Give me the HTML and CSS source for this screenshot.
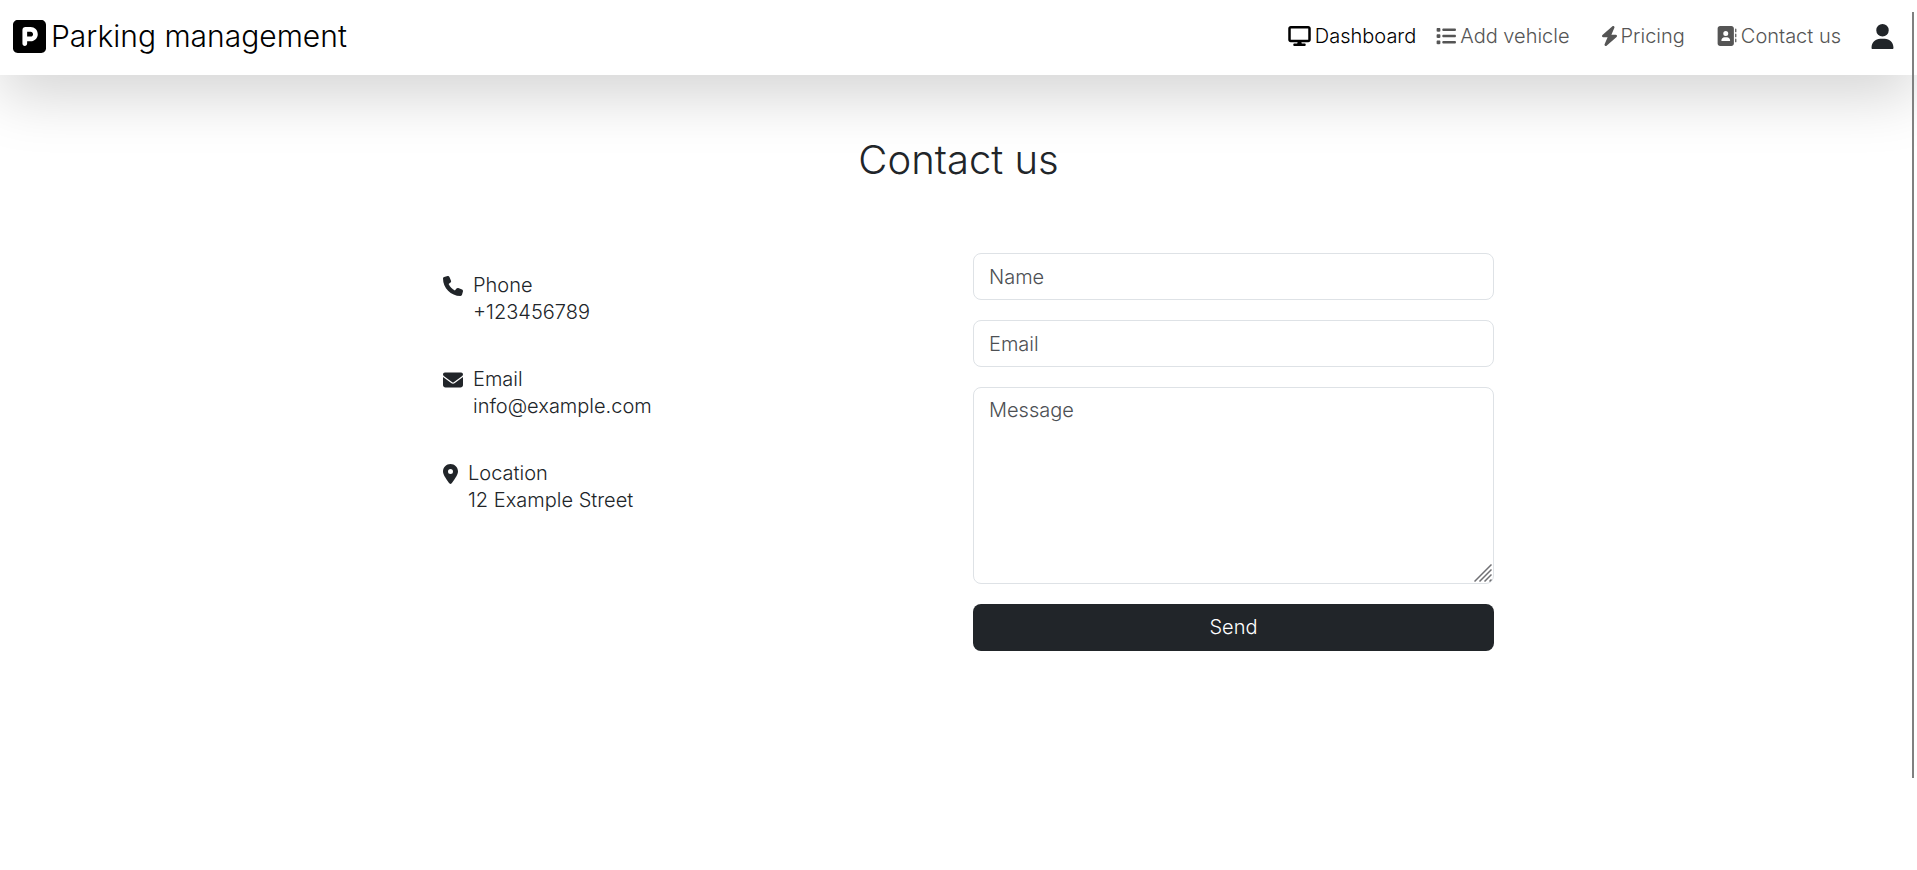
FILE: index.html
```html
<!DOCTYPE html>
<html lang="en">
<head>
<meta charset="utf-8">
<meta name="viewport" content="width=device-width, initial-scale=1">
<title>Parking management</title>
<link rel="stylesheet" href="styles.css">
</head>
<body>
<header class="navbar">
  <a class="brand" href="#">
    <svg class="brand-icon" viewBox="0 32 448 448" aria-hidden="true"><path d="M64 32C28.700 32 0 60.700 0 96V416c0 35.300 28.700 64 64 64H384c35.300 0 64-28.700 64-64V96c0-35.300-28.700-64-64-64H64zM192 256h48c17.700 0 32-14.300 32-32s-14.300-32-32-32H192v64zm48 64H192v32c0 17.700-14.300 32-32 32s-32-14.300-32-32V168c0-22.100 17.900-40 40-40h72c53 0 96 43 96 96s-43 96-96 96z"/></svg>
    <span>Parking management</span>
  </a>
  <nav class="menu">
    <a class="menu-link menu-link-active" href="#">
      <svg class="icon icon-wide" viewBox="0 0 576 512" aria-hidden="true"><path d="M64 0C28.700 0 0 28.700 0 64V352c0 35.300 28.700 64 64 64H240l-10.700 32H160c-17.700 0-32 14.300-32 32s14.300 32 32 32H416c17.700 0 32-14.300 32-32s-14.300-32-32-32H346.700L336 416H512c35.300 0 64-28.700 64-64V64c0-35.300-28.700-64-64-64H64zM512 64V352H64V64H512z"/></svg>
      <span>Dashboard</span>
    </a>
    <a class="menu-link" href="#">
      <svg class="icon" viewBox="0 0 512 512" aria-hidden="true"><path d="M40 48C26.700 48 16 58.700 16 72v48c0 13.300 10.700 24 24 24H88c13.300 0 24-10.700 24-24V72c0-13.300-10.700-24-24-24H40zM192 64c-17.700 0-32 14.300-32 32s14.300 32 32 32H480c17.700 0 32-14.300 32-32s-14.300-32-32-32H192zm0 160c-17.700 0-32 14.300-32 32s14.300 32 32 32H480c17.700 0 32-14.300 32-32s-14.300-32-32-32H192zm0 160c-17.700 0-32 14.300-32 32s14.300 32 32 32H480c17.700 0 32-14.300 32-32s-14.300-32-32-32H192zM16 232v48c0 13.300 10.700 24 24 24H88c13.300 0 24-10.700 24-24V232c0-13.300-10.700-24-24-24H40c-13.300 0-24 10.700-24 24zM40 368c-13.300 0-24 10.700-24 24v48c0 13.300 10.700 24 24 24H88c13.300 0 24-10.700 24-24V392c0-13.300-10.700-24-24-24H40z"/></svg>
      <span>Add vehicle</span>
    </a>
    <a class="menu-link menu-link-spaced" href="#">
      <svg class="icon icon-narrow" viewBox="32 0 384 512" aria-hidden="true"><path d="M349.400 44.600c5.900-13.700 1.500-29.700-10.600-38.500s-28.600-8-39.900 1.800l-256 224c-10 8.800-13.600 22.900-8.900 35.300S50.700 288 64 288H175.500L98.600 467.400c-5.900 13.700-1.500 29.700 10.600 38.500s28.600 8 39.900-1.800l256-224c10-8.800 13.600-22.900 8.900-35.300s-16.600-20.700-30-20.700H272.500L349.400 44.600z"/></svg>
      <span>Pricing</span>
    </a>
    <a class="menu-link menu-link-spaced" href="#">
      <svg class="icon" viewBox="16 0 512 512" aria-hidden="true"><path d="M96 0C60.700 0 32 28.700 32 64V448c0 35.300 28.700 64 64 64H384c35.300 0 64-28.700 64-64V64c0-35.300-28.700-64-64-64H96zM208 288h64c44.200 0 80 35.800 80 80c0 8.800-7.200 16-16 16H144c-8.800 0-16-7.200-16-16c0-44.200 35.800-80 80-80zm-32-96a64 64 0 1 1 128 0 64 64 0 1 1 -128 0zM512 80c0-8.800-7.200-16-16-16s-16 7.200-16 16v64c0 8.800 7.200 16 16 16s16-7.200 16-16V80zM496 192c-8.800 0-16 7.200-16 16v64c0 8.800 7.200 16 16 16s16-7.200 16-16V208c0-8.800-7.200-16-16-16zm16 144c0-8.800-7.200-16-16-16s-16 7.200-16 16v64c0 8.800 7.200 16 16 16s16-7.200 16-16V336z"/></svg>
      <span>Contact us</span>
    </a>
    <button class="account" type="button" aria-label="Account">
      <svg class="account-icon" viewBox="0 0 448 512" aria-hidden="true"><path d="M224 256A128 128 0 1 0 224 0a128 128 0 1 0 0 256zm-45.700 48C79.800 304 0 383.800 0 482.300C0 498.700 0 512 12 512H436c12 0 12-13.300 12-29.700C448 383.800 368.200 304 269.700 304H178.300z"/></svg>
    </button>
  </nav>
</header>
<main class="page">
  <h1 class="title">Contact us</h1>
  <div class="columns">
    <address class="details">
      <div class="detail">
        <svg class="icon" viewBox="0 0 512 512" aria-hidden="true"><path d="M164.900 24.600c-7.700-18.600-28-28.500-47.400-23.200l-88 24C12.100 30.200 0 46 0 64C0 311.400 200.600 512 448 512c18 0 33.800-12.100 38.600-29.500l24-88c5.300-19.400-4.600-39.700-23.200-47.400l-96-40c-16.300-6.800-35.200-2.100-46.300 11.600L304.700 368C234.300 334.700 177.300 277.700 144 207.300L193.300 167c13.700-11.200 18.400-30 11.600-46.300l-40-96z"/></svg>
        <div>Phone<br>+123456789</div>
      </div>
      <div class="detail">
        <svg class="icon" viewBox="0 0 512 512" aria-hidden="true"><path d="M48 64C21.500 64 0 85.500 0 112c0 15.100 7.100 29.300 19.200 38.400L236.800 313.600c11.400 8.500 27 8.500 38.400 0L492.800 150.400c12.100-9.100 19.200-23.300 19.200-38.400c0-26.500-21.500-48-48-48H48zM0 176V384c0 35.300 28.700 64 64 64H448c35.300 0 64-28.700 64-64V176L294.400 339.200c-22.800 17.100-54 17.100-76.800 0L0 176z"/></svg>
        <div>Email<br>info@example.com</div>
      </div>
      <div class="detail">
        <svg class="icon icon-narrow" viewBox="0 0 384 512" aria-hidden="true"><path d="M215.700 499.200C267 435 384 279.400 384 192C384 86 298 0 192 0S0 86 0 192c0 87.400 117 243 168.300 307.200c12.300 15.300 35.100 15.300 47.400 0zM192 128a64 64 0 1 1 0 128 64 64 0 1 1 0-128z"/></svg>
        <div>Location<br>12 Example Street</div>
      </div>
    </address>
    <form class="form">
      <input class="field" type="text" placeholder="Name" aria-label="Name">
      <input class="field" type="email" placeholder="Email" aria-label="Email">
      <div class="message">
        <textarea class="field field-message" placeholder="Message" aria-label="Message"></textarea>
        <svg class="grip" viewBox="0 0 18 18" aria-hidden="true"><path d="M0.500 17.500L17.500 0.500M5.500 17.500L17.500 5.500M10.500 17.500L17.500 10.500M15.500 17.500L17.500 15.500"/></svg>
      </div>
      <button class="send" type="submit">Send</button>
    </form>
  </div>
</main>
<div class="scroll-line"></div>
</body>
</html>
```
FILE: styles.css
```css
* {
  box-sizing: border-box;
}

body {
  margin: 0;
  background: #fff;
  color: #212529;
  font-family: Inter, "Liberation Sans", sans-serif;
  font-size: 20px;
  font-weight: 300;
  line-height: 27px;
}

.navbar {
  display: flex;
  align-items: center;
  justify-content: space-between;
  height: 75px;
  padding: 0 23px 3px 13px;
  background: #fff;
  box-shadow: 0 20px 60px rgba(0, 0, 0, 0.175);
}

.brand,
.menu,
.menu-link {
  display: flex;
  align-items: center;
}

.brand {
  gap: 5px;
  color: #000;
  font-size: 30px;
  text-decoration: none;
}

.brand-icon {
  width: 33px;
  height: 33px;
}

.menu {
  gap: 20px;
}

.menu-link {
  gap: 4px;
  color: #555;
  text-decoration: none;
}

.menu-link-active {
  color: #000;
}

.menu-link-spaced {
  margin-left: 12px;
}

.icon {
  flex: none;
  width: 20px;
  height: 20px;
}

.icon-wide {
  width: 23px;
}

.icon-narrow {
  width: 15px;
}

svg {
  display: block;
  fill: currentColor;
}

.account {
  margin-left: 10px;
  padding: 0;
  border: 0;
  background: none;
  color: #212529;
}

.account-icon {
  width: 23px;
  height: 25px;
}

.page {
  width: 100%;
  max-width: 1071px;
  margin: 0 auto;
  padding-top: 61px;
}

.title {
  margin: 0 0 69px;
  font-size: 40px;
  font-weight: 300;
  line-height: 48px;
  text-align: center;
}

.columns {
  display: grid;
  grid-template-columns: 1fr 1fr;
  gap: 29px;
}

.details {
  display: flex;
  flex-direction: column;
  gap: 40px;
  padding: 19px 20px;
  font-style: normal;
}

.detail {
  display: flex;
  gap: 10px;
}

.detail .icon {
  margin-top: 4px;
}

.form {
  display: flex;
  flex-direction: column;
  gap: 20px;
}

.field {
  display: block;
  width: 100%;
  height: 47px;
  padding: 9px 15px;
  border: 1px solid #dee2e6;
  border-radius: 8px;
  background: #fff;
  color: #212529;
  font: inherit;
}

.field::placeholder {
  color: #4d5054;
  opacity: 1;
}

.message {
  position: relative;
}

.field-message {
  height: 197px;
  resize: none;
}

.grip {
  position: absolute;
  right: 2px;
  bottom: 2px;
  width: 18px;
  height: 18px;
  stroke: #707074;
  stroke-width: 1.5;
  pointer-events: none;
}

.send {
  height: 47px;
  border: 0;
  border-radius: 8px;
  background: #212529;
  color: #fff;
  font: inherit;
}

.scroll-line {
  position: fixed;
  top: 12px;
  right: 3px;
  bottom: 92px;
  width: 2px;
  background: #808080;
}
```
